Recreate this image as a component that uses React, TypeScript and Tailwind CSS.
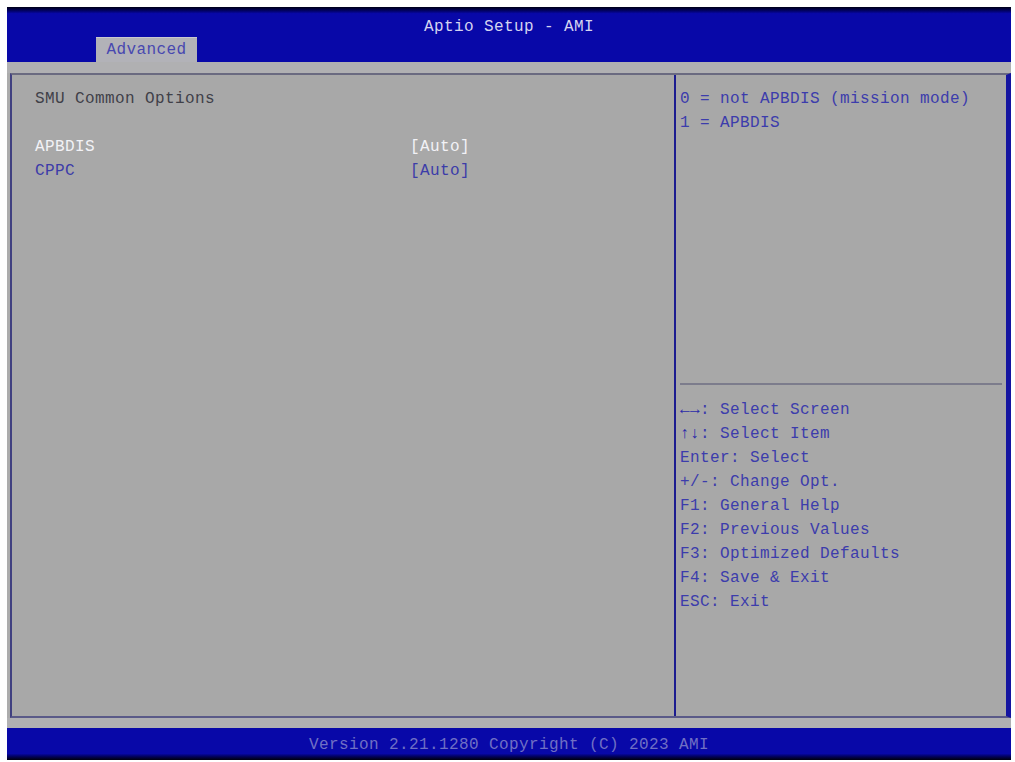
import React from 'react';

const mono = { fontFamily: '"Liberation Mono", "DejaVu Sans Mono", monospace' };

const helpKeys: [string, string][] = [
  ['←→', ': Select Screen'],
  ['↑↓', ': Select Item'],
  ['Enter', ': Select'],
  ['+/-', ': Change Opt.'],
  ['F1', ': General Help'],
  ['F2', ': Previous Values'],
  ['F3', ': Optimized Defaults'],
  ['F4', ': Save & Exit'],
  ['ESC', ': Exit'],
];

const Arrow = ({ ch }: { ch: string }) => (
  <span className="inline-block w-[10px] text-center font-bold text-[#2a2aa8]">{ch}</span>
);

const App: React.FC = () => {
  return (
    <div className="w-[1015px] h-[762px] bg-white pt-[7px] pl-[7px] overflow-hidden" style={mono}>
      <div className="w-[1004px] h-[753px] flex flex-col bg-[#acacac] text-[16px] tracking-[0.4px]">
        {/* header */}
        <div className="h-[55px] flex flex-col bg-[#0808a8] bg-gradient-to-b from-[#000018] via-[#0808a8] via-[12%] to-[#0808a8]">
          <div className="h-[30px] flex items-center justify-center pt-[10px] text-[#d4d4f0]">
            Aptio Setup - AMI
          </div>
          <div className="h-[25px] flex items-end">
            <div className="ml-[89px] w-[101px] h-[25px] bg-[#b2b2b8] flex items-center justify-center text-[#4848b0] border-t border-[#c8c8d0]">
              Advanced
            </div>
          </div>
        </div>

        <div className="h-[11px] bg-[#b0b0b2]" />

        {/* main panel */}
        <div className="h-[645px] ml-[3px] flex border-l-2 border-t-2 border-b-2 border-r-[5px] border-l-[#404080] border-t-[#6a6a80] border-b-[#5a5a88] border-r-[#1414a0] bg-[#a8a8a8]">
          <div className="w-[662px] pl-[23px] pt-[12px] leading-[24px]">
            <div className="text-[#404048]">SMU Common Options</div>
            <div className="h-[24px]" />
            <div className="flex">
              <span className="w-[375px] text-[#f2f2f6]">APBDIS</span>
              <span className="text-[#f2f2f6]">[Auto]</span>
            </div>
            <div className="flex">
              <span className="w-[375px] text-[#3c3ca8]">CPPC</span>
              <span className="text-[#3c3ca8]">[Auto]</span>
            </div>
          </div>

          <div className="w-[2px] bg-[#1c1c90]" />

          <div className="flex-1 flex flex-col leading-[24px] text-[#3c3cac]">
            <div className="h-[308px] pl-[4px] pt-[12px]">
              <div>0 = not APBDIS (mission mode)</div>
              <div>1 = APBDIS</div>
            </div>
            <div className="ml-[4px] mr-[4px] h-[2px] bg-[#7c7c8c]" />
            <div className="pl-[4px] pt-[13px]">
              {helpKeys.map(([k, v]) => (
                <div key={k} className="whitespace-pre">
                  {k === '←→' || k === '↑↓' ? (
                    <>
                      <Arrow ch={k[0]} />
                      <Arrow ch={k[1]} />
                    </>
                  ) : (
                    k
                  )}
                  {v}
                </div>
              ))}
            </div>
          </div>
        </div>

        <div className="h-[10px] bg-[#b0b0b2]" />

        {/* footer */}
        <div className="h-[32px] flex items-center justify-center pt-[2px] bg-gradient-to-b from-[#0808a8] via-[#0808a8] via-[80%] to-[#000010] text-[#7070c4]">
          Version 2.21.1280 Copyright (C) 2023 AMI
        </div>
      </div>
    </div>
  );
};

export default App;
